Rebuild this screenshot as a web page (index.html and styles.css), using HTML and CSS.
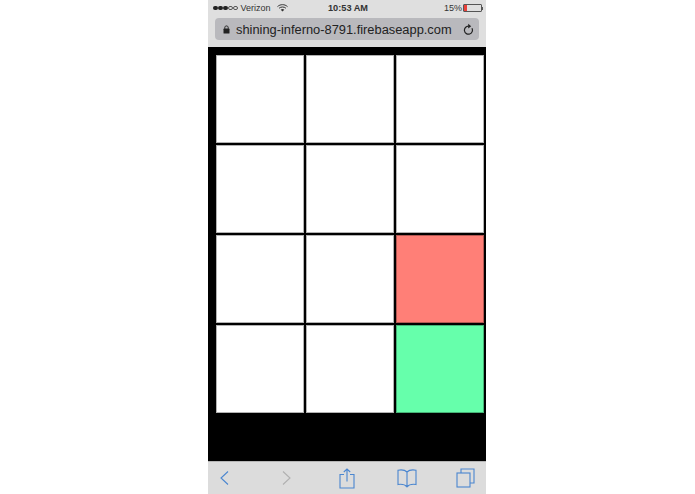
FILE: index.html
```html
<!DOCTYPE html>
<html lang="en">
<head>
    <meta charset="UTF-8">
    <title>Grid</title>
    <link rel="stylesheet" href="styles.css">
</head>
<body>

<div class="phone">
    <!-- Safari top chrome -->
    <div class="top-bar">
        <div class="status">
            <div class="status-left">
                <span class="dots">
                    <i class="dot"></i><i class="dot"></i><i class="dot"></i><i class="dot empty"></i><i class="dot empty"></i>
                </span>
                <span>Verizon</span>
                <svg class="wifi" width="11" height="8" viewBox="0 0 11 8">
                    <path d="M0.5 2.6C3.4 0 7.6 0 10.5 2.6" fill="none" stroke="#333" stroke-width="1"/>
                    <path d="M2.1 4.2C4 2.6 7 2.6 8.9 4.2" fill="none" stroke="#333" stroke-width="1"/>
                    <path d="M3.7 5.7C4.8 4.8 6.2 4.8 7.3 5.7L5.5 7.6Z" fill="#333"/>
                </svg>
            </div>
            <div class="clock">10:53 AM</div>
            <div class="status-right">
                <span>15%</span>
                <span class="battery"><span class="battery-level"></span></span>
                <span class="battery-tip"></span>
            </div>
        </div>
        <div class="url-bar">
            <svg class="lock" width="7" height="9" viewBox="0 0 7 9">
                <rect x="0.5" y="3.6" width="6" height="5" rx="0.6" fill="#222"/>
                <path d="M1.8 3.8V2.5C1.8 0.4 5.2 0.4 5.2 2.5V3.8" fill="none" stroke="#222" stroke-width="1"/>
            </svg>
            <span class="url">shining-inferno-8791.firebaseapp.com</span>
            <svg class="reload" width="11" height="12" viewBox="0 0 11 12">
                <path d="M8.9 5.2A4 4 0 1 1 5.6 3.2" fill="none" stroke="#222" stroke-width="1.2"/>
                <path d="M5.2 0.8L8.2 3.2L5.2 5.4Z" fill="#222"/>
            </svg>
        </div>
    </div>

    <!-- Game board -->
    <div class="board">
        <div class="grid">
            <div class="cell"></div>
            <div class="cell"></div>
            <div class="cell"></div>
            <div class="cell"></div>
            <div class="cell"></div>
            <div class="cell"></div>
            <div class="cell"></div>
            <div class="cell"></div>
            <div class="cell red"></div>
            <div class="cell"></div>
            <div class="cell"></div>
            <div class="cell green"></div>
        </div>
    </div>

    <!-- Safari bottom toolbar -->
    <div class="toolbar">
        <svg width="9" height="14" viewBox="0 0 9 14">
            <path d="M8 0.5L1 7L8 13.5" fill="none" stroke="#4a86d0" stroke-width="1.1"/>
        </svg>
        <svg width="9" height="14" viewBox="0 0 9 14">
            <path d="M1 0.5L8 7L1 13.5" fill="none" stroke="#b0b0b0" stroke-width="1.1"/>
        </svg>
        <svg width="16" height="21" viewBox="0 0 16 21">
            <path d="M5 6.5H1V20H15V6.5H11" fill="none" stroke="#4a86d0" stroke-width="1.1"/>
            <path d="M8 13.5V1M4.8 4L8 1L11.2 4" fill="none" stroke="#4a86d0" stroke-width="1.1"/>
        </svg>
        <svg width="20" height="19" viewBox="0 0 20 19">
            <path d="M10 3C8 1 4.5 0.6 1 1.2V15.5C4.5 15 8 15.5 10 17.8C12 15.5 15.5 15 19 15.5V1.2C15.5 0.6 12 1 10 3V17.8" fill="none" stroke="#4a86d0" stroke-width="1.1"/>
        </svg>
        <svg width="19" height="20" viewBox="0 0 19 20">
            <rect x="1" y="5" width="13" height="14" fill="none" stroke="#4a86d0" stroke-width="1.1"/>
            <path d="M5 5V1H18V15H14" fill="none" stroke="#4a86d0" stroke-width="1.1"/>
        </svg>
    </div>
</div>

</body>
</html>
```

FILE: styles.css
```css
body {
    margin: 0;
    background-color: #ffffff;
    font-family: 'Liberation Sans', Arial, sans-serif;
    color: #222;
    display: flex;
    justify-content: center;
}
.phone {
    width: 278px;
    height: 494px;
    margin-right: 1px;
    display: flex;
    flex-direction: column;
}
.top-bar {
    height: 47px;
    background-color: #dfdfdf;
    padding: 0 7px;
    box-sizing: border-box;
}
.status {
    height: 16px;
    margin: 0 -4px 0 -2px;
    display: flex;
    align-items: center;
    justify-content: space-between;
    font-size: 9px;
    color: #333;
}
.status-left {
    width: 90px;
    display: flex;
    align-items: center;
    gap: 3px;
}
.status-right {
    width: 90px;
    display: flex;
    align-items: center;
    justify-content: flex-end;
}
.clock {
    font-weight: bold;
    font-size: 9.2px;
}
.dots {
    display: flex;
    gap: 0.5px;
}
.dot {
    width: 4.5px;
    height: 4.5px;
    border-radius: 50%;
    background-color: #222;
    box-sizing: border-box;
}
.dot.empty {
    background: none;
    border: 0.5px solid #555;
}
.wifi {
    margin-left: 3px;
}
.battery {
    width: 17px;
    height: 6px;
    margin-left: 1px;
    border: 1px solid #555;
    border-radius: 1px;
    display: block;
}
.battery-level {
    display: block;
    width: 3px;
    height: 6px;
    background-color: #e8403a;
}
.battery-tip {
    width: 1px;
    height: 3px;
    background-color: #555;
}
.url-bar {
    height: 22px;
    margin-top: 2px;
    background-color: #b9b9bd;
    border-radius: 4px;
    display: flex;
    align-items: center;
    padding: 0 5px 0 8px;
    font-size: 12.85px;
}
.url {
    flex: 1;
    margin-left: 6px;
    white-space: nowrap;
}
.board {
    height: 414px;
    background-color: #000000;
    padding: 8px 2px 0 8px;
    box-sizing: border-box;
}
.grid {
    display: grid;
    grid-template-columns: repeat(3, 88px);
    grid-auto-rows: 88px;
    gap: 2px;
}
/* soft edge, the lines in the shot are a bit blurry and read thicker than 2px */
.cell {
    background-color: #ffffff;
    box-shadow: inset 0 0 0 1px rgba(0, 0, 0, 0.3);
}
.red {
    background-color: #ff7f77;
}
.green {
    background-color: #66ffab;
}
.toolbar {
    flex: 1;
    background-color: #dcdcdc;
    border-top: 1px solid #b5b5b5;
    display: grid;
    grid-template-columns: 62px 57px 58px 59px auto;
    align-items: center;
    justify-items: start;
    padding-left: 12px;
}
```
